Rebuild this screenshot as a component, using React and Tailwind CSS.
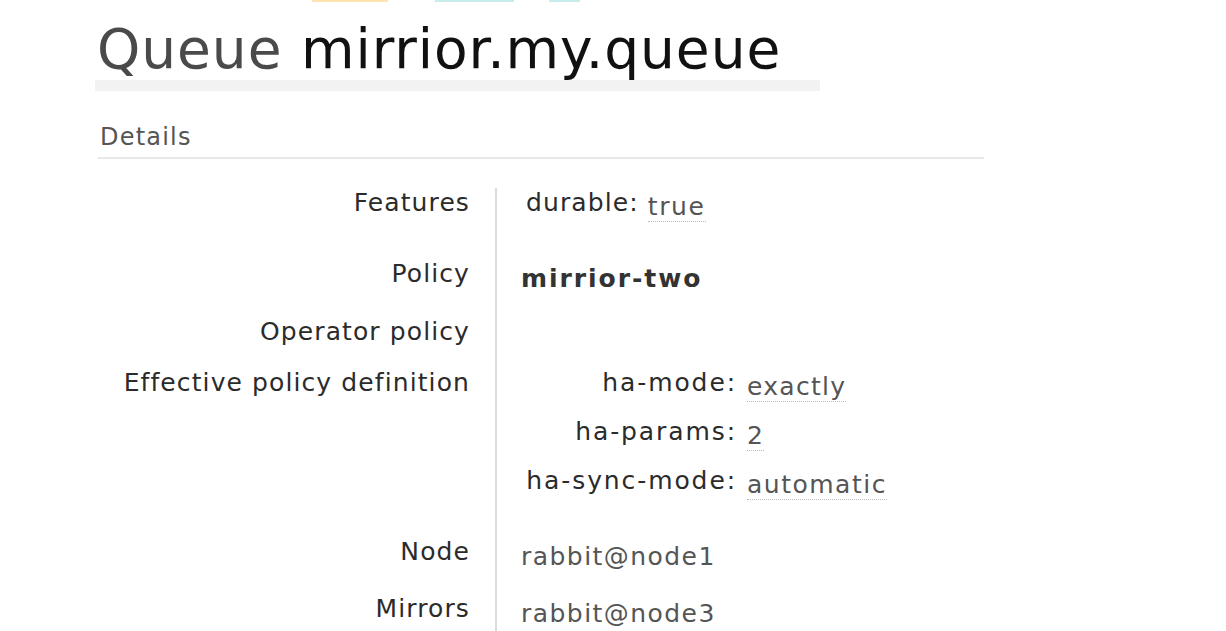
export default function App() {
  const font = { fontFamily: '"DejaVu Sans", Verdana, sans-serif' };
  const Row = ({ label, children, className = "" }) => (
    <div className={"flex " + className}>
      <div className="w-[400px] shrink-0 pr-[25px] text-right text-[#2b2b2b]">{label}</div>
      <div className="flex-1 border-l-2 border-[#dcdcdc] pl-[24px]">{children}</div>
    </div>
  );
  const Abbr = ({ children }) => (
    <span className="border-b border-dotted border-[#bbb] text-[#555]">{children}</span>
  );
  return (
    <div className="h-[631px] w-[1226px] bg-white overflow-hidden relative" style={font}>
      <div className="flex h-[2px]">
        <div className="ml-[312px] w-[76px] bg-[#ffe4b0]" />
        <div className="ml-[47px] w-[79px] bg-[#c8ecec]" />
        <div className="ml-[35px] w-[31px] bg-[#c8ecec]" />
      </div>
      <div className="pl-[95px]">
        <div className="w-[725px] pt-[17px] border-b-[11px] border-[#f2f2f2] leading-[61px] text-[55px] tracking-[0.95px] pl-[2px]">
          <span className="text-[#4a4a4a]">Queue</span>{" "}
          <span className="text-[#111]">mirrior.my.queue</span>
        </div>
        <div className="mt-[31px] ml-[3px] w-[886px] border-b-2 border-[#e8e8e8] pl-[2px] pb-[5px] text-[24px] leading-[30px] text-[#555] tracking-[1.2px]">
          Details
        </div>
        <div className="mt-[29px] text-[25px] leading-[30px] tracking-[1.1px]">
          <Row label="Features" className="h-[71px]">
            <div className="pl-[5px]">
              <span className="text-[#2b2b2b]">durable:</span>{" "}
              <span className="relative top-[4px] tracking-[1.6px]"><Abbr>true</Abbr></span>
            </div>
          </Row>
          <Row label="Policy" className="h-[58px]">
            <div className="pt-[5px] font-bold text-[#333] tracking-[1.95px]">mirrior-two</div>
          </Row>
          <Row label="Operator policy" className="h-[51px]">
            <div />
          </Row>
          <Row label="Effective policy definition" className="h-[169px]">
            <div className="grid grid-cols-[216px_auto] gap-x-[10px] gap-y-[19px] justify-start">
              <div className="text-right text-[#2b2b2b] tracking-[1.9px]">ha-mode:</div>
              <div className="relative top-[4px] tracking-[1.3px]"><Abbr>exactly</Abbr></div>
              <div className="text-right text-[#2b2b2b] tracking-[1.9px]">ha-params:</div>
              <div className="relative top-[4px]"><Abbr>2</Abbr></div>
              <div className="text-right text-[#2b2b2b] tracking-[1.9px]">ha-sync-mode:</div>
              <div className="relative top-[4px] tracking-[1.5px]"><Abbr>automatic</Abbr></div>
            </div>
          </Row>
          <Row label="Node" className="h-[57px]">
            <div className="pt-[5px] text-[#555] tracking-[1.45px]">rabbit@node1</div>
          </Row>
          <Row label="Mirrors" className="h-[60px]">
            <div className="pt-[5px] text-[#555] tracking-[1.45px]">rabbit@node3</div>
          </Row>
        </div>
      </div>
    </div>
  );
}
